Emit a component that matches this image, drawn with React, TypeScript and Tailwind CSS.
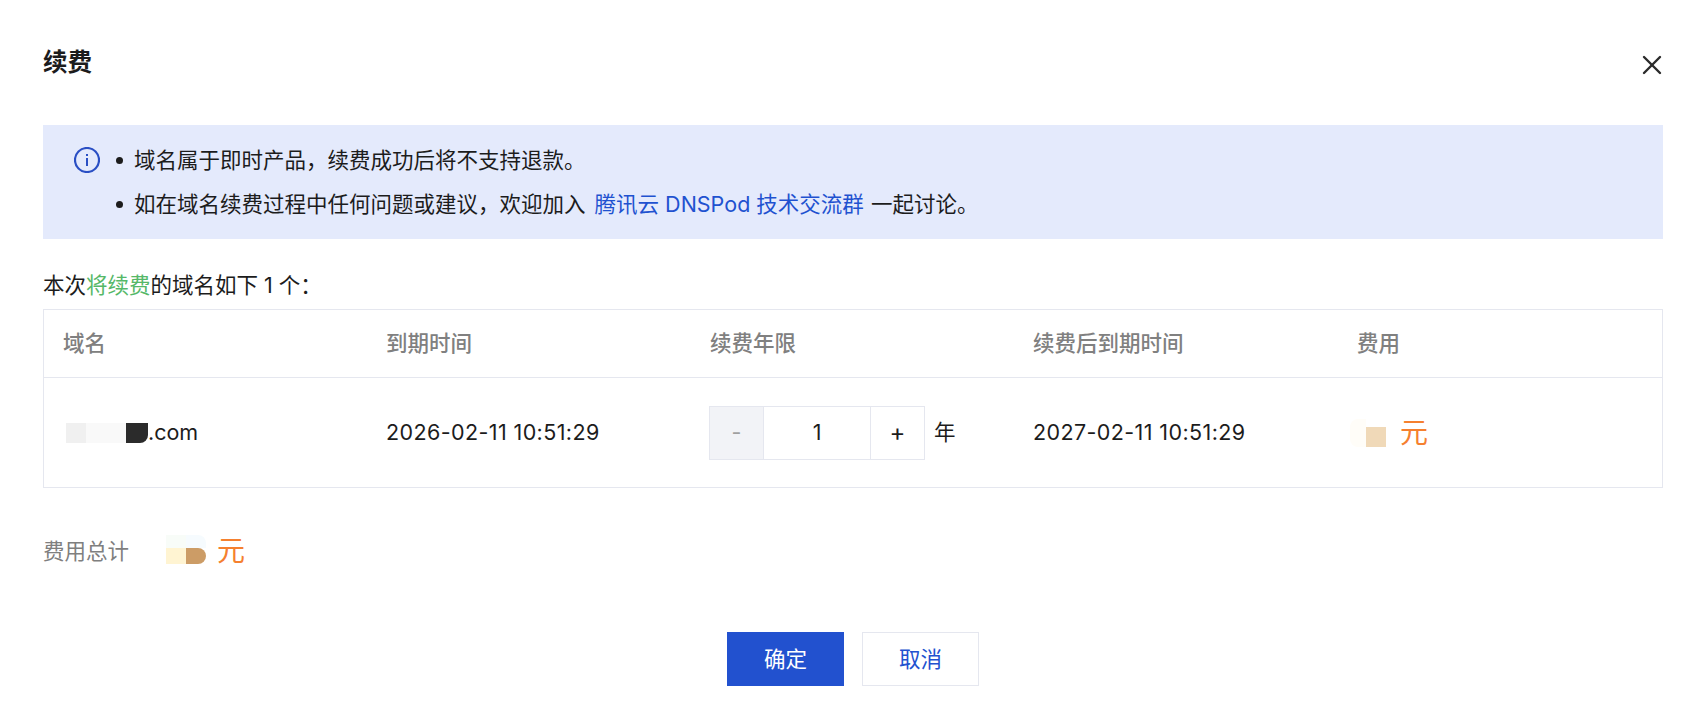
import { X } from 'lucide-react';

const font = { fontFamily: 'Inter, "Noto Sans CJK SC", sans-serif' };

const columns = 'grid grid-cols-[323px_324px_323px_324px_1fr]';

export default function App() {
  return (
    <div
      style={font}
      className="flex h-[728px] w-[1702px] flex-col overflow-hidden bg-white pr-[39px] pl-[43px] text-[21.5px] text-[#1c1c1c]"
    >
      {/* header */}
      <div className="flex h-[125px] items-start justify-between pt-[47px]">
        <h1 className="text-[24.6px] leading-[30px] font-bold">续费</h1>
        <X className="mt-[2px] -mr-[5px] h-8 w-8 text-[#2b2b2b]" strokeWidth={1.8} />
      </div>

      {/* notice */}
      <div className="flex h-[114px] gap-[16px] bg-[#e4eafc] py-[13px] pl-[31px]">
        <svg viewBox="0 0 26 26" className="mt-[9px] h-[26px] w-[26px]" fill="none">
          <circle cx="13" cy="13" r="12" stroke="#2a4fc4" strokeWidth="2.2" />
          <rect x="12" y="11" width="2" height="8" fill="#2a4fc4" />
          <rect x="12" y="7" width="2" height="2" fill="#2a4fc4" />
        </svg>
        <ul className="leading-[44px]">
          <li className="flex items-center gap-[11px]">
            <span className="h-[7px] w-[7px] rounded-full bg-[#1c1c1c]" />
            <span>域名属于即时产品，续费成功后将不支持退款。</span>
          </li>
          <li className="flex items-center gap-[11px]">
            <span className="h-[7px] w-[7px] rounded-full bg-[#1c1c1c]" />
            <span>
              如在域名续费过程中任何问题或建议，欢迎加入 <a className="mr-[1px] ml-[3px] text-[#1f52d0]">腾讯云 DNSPod 技术交流群</a> 一起讨论。
            </span>
          </li>
        </ul>
      </div>

      <p className="mt-[31px] mb-[9px] leading-[30px]">
        本次<span className="text-[#55b868]">将续费</span>的域名如下 1 个：
      </p>

      {/* table */}
      <div className="h-[179px] border border-[#e5e7ef]">
        <div className={`${columns} h-[68px] items-center border-b border-[#e5e7ef] pl-[19px] font-medium text-[#808080]`}>
          <span>域名</span>
          <span>到期时间</span>
          <span>续费年限</span>
          <span>续费后到期时间</span>
          <span>费用</span>
        </div>
        <div className={`${columns} h-[109px] items-center pl-[19px]`}>
          <div className="flex items-center">
            <span className="ml-[3px] h-[20px] w-[20px] bg-[#f0f0f0]" />
            <span className="h-[20px] w-[40px] bg-[#f9f9f9]" />
            <span className="h-[20px] w-[22px] rounded-br-[8px] bg-[#2b2b2b]" />
            <span>.com</span>
          </div>
          <span className="tracking-[0.4px]">2026-02-11 10:51:29</span>
          <div className="-ml-[1px] flex items-center gap-[9px]">
            <div className="flex h-[54px] w-[216px] border border-[#e5e7ef]">
              <span className="flex w-[54px] items-center justify-center border-r border-[#e5e7ef] bg-[#f2f3f7] text-[#a0a0a0]">-</span>
              <span className="flex flex-1 items-center justify-center">1</span>
              <span className="flex w-[54px] items-center justify-center border-l border-[#e5e7ef] text-[24px]">+</span>
            </div>
            <span>年</span>
          </div>
          <span className="tracking-[0.4px]">2027-02-11 10:51:29</span>
          <div className="-ml-[7px] flex items-center">
            <span className="h-[28px] w-[16px] rounded-l-[8px] bg-[#fffdf8]" />
            <span className="mt-[8px] h-[20px] w-[20px] bg-[#f0d9b8]" />
            <span className="ml-[14px] text-[28px] leading-[30px] text-[#f5802f]">元</span>
          </div>
        </div>
      </div>

      {/* total */}
      <div className="mt-[48px] flex h-[30px] items-center">
        <span className="w-[123px] text-[#7f7f7f]">费用总计</span>
        <div className="mb-[4px] grid grid-cols-[20px_20px]">
          <span className="h-[13px] bg-[#f8fcf8]" />
          <span className="h-[13px] rounded-tr-[8px] bg-[#f6fbfe]" />
          <span className="h-[16px] bg-[#fff4d2]" />
          <span className="h-[16px] rounded-r-[8px] bg-[#cc9c66]" />
        </div>
        <span className="ml-[11px] text-[28px] leading-[30px] text-[#f5802f]">元</span>
      </div>

      {/* footer */}
      <div className="mt-[66px] flex justify-center gap-[18px]">
        <button className="h-[54px] w-[117px] bg-[#2251cf] text-white">确定</button>
        <button className="h-[54px] w-[117px] border border-[#e5e7ef] bg-white text-[#2251cf]">取消</button>
      </div>
    </div>
  );
}
